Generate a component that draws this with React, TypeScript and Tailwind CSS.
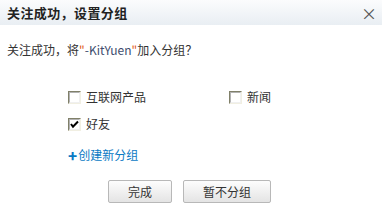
import React from "react";

function Box({ checked }: { checked?: boolean }) {
  return (
    <span className="relative inline-block w-[13px] h-[13px] border border-t-[#808069] border-l-[#808069] border-b-[#f1efe2] border-r-[#f1efe2] bg-white shrink-0">
      <span className="absolute inset-0 border border-t-[#404040] border-l-[#404040] border-b-[#dcdcdc] border-r-[#dcdcdc] opacity-40" />
      {checked && (
        <svg className="absolute left-[1px] top-[1px]" width="9" height="9" viewBox="0 0 9 9">
          <path d="M1 4 L3 6.8 L8 1.5" stroke="#000" strokeWidth="2" fill="none" />
        </svg>
      )}
    </span>
  );
}

export default function App() {
  const font = { fontFamily: '"Noto Sans CJK SC", "Liberation Sans", sans-serif' };
  return (
    <div className="w-[382px] h-[216px] bg-white text-[12px] text-[#333]" style={font}>
      <div className="h-[25px] flex items-center justify-between pl-[7px] pr-[5px] bg-gradient-to-b from-[#fbfcfd] to-[#e9eef3]">
        <span className="text-[13px] font-bold text-[#222] leading-none tracking-[0.4px]">关注成功，设置分组</span>
        <span className="text-[#555] text-[16px] leading-none">×</span>
      </div>
      <div className="pl-[7px] pt-[17px] leading-[16px] text-[#333]">
        关注成功，将<span className="text-[#e05a1a]">"</span><span className="text-[#404c6e]">-KitYuen</span><span className="text-[#e05a1a]">"</span>加入分组？
      </div>
      <div className="pl-[68px] pt-[31px] grid grid-cols-[161px_1fr] gap-y-[11px]">
        <label className="flex items-center gap-[5px] leading-[16px]"><Box /><span>互联网产品</span></label>
        <label className="flex items-center gap-[5px] leading-[16px]"><Box /><span>新闻</span></label>
        <label className="flex items-center gap-[5px] leading-[16px]"><Box checked /><span>好友</span></label>
      </div>
      <div className="pl-[68px] pt-[15px] text-[#0a7ac4] leading-[16px] flex items-center">
        <span className="font-black text-[15px] leading-none mr-[1px]">+</span>创建新分组
      </div>
      <div className="flex gap-[11px] pl-[108px] pt-[17px]">
        <button className="w-[64px] h-[23px] border border-[#b8b8b8] rounded-[2px] bg-gradient-to-b from-[#fdfdfd] to-[#e4e4e4] text-[12px] text-[#333]">完成</button>
        <button className="w-[88px] h-[23px] border border-[#b8b8b8] rounded-[2px] bg-gradient-to-b from-[#fdfdfd] to-[#e4e4e4] text-[12px] text-[#333]">暂不分组</button>
      </div>
    </div>
  );
}
